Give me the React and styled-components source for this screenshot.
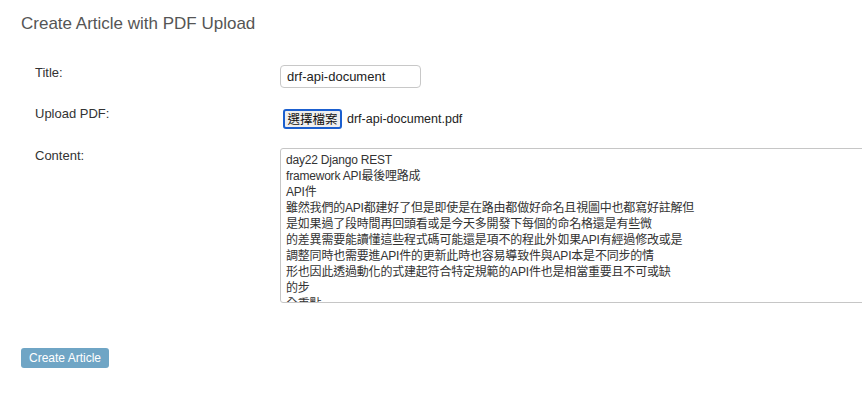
import React from 'react'
import styled, { createGlobalStyle } from 'styled-components'

const GlobalStyle = createGlobalStyle`
  html, body {
    margin: 0;
    padding: 0;
    background: #fff;
    overflow: hidden;
  }
  body {
    font-family: "Liberation Sans", Arial, "Noto Sans CJK TC", sans-serif;
    color: #333;
  }
`

const CONTENT = `day22 Django REST
framework API最後哩路成
API件
雖然我們的API都建好了但是即使是在路由都做好命名且視圖中也都寫好註解但
是如果過了段時間再回頭看或是今天多開發下每個的命名格還是有些微
的差異需要能讀懂這些程式碼可能還是項不的程此外如果API有經過修改或是
調整同時也需要進API件的更新此時也容易導致件與API本是不同步的情
形也因此透過動化的式建起符合特定規範的API件也是相當重要且不可或缺
的步
全重點`

const App = () => {
  return (
    <>
      <GlobalStyle />
      <Page>
        <Heading>Create Article with PDF Upload</Heading>
        <Form onSubmit={(e) => e.preventDefault()}>
          <Fields>
            <Label $top={0}>Title:</Label>
            <TextInput defaultValue="drf-api-document" />

            <Label $top={0}>Upload PDF:</Label>
            <FilePicker>
              <FileButton type="button">選擇檔案</FileButton>
              <FileName>drf-api-document.pdf</FileName>
            </FilePicker>

            <Label $top={0}>Content:</Label>
            <ContentArea defaultValue={CONTENT} />
          </Fields>
          <SubmitButton type="submit">Create Article</SubmitButton>
        </Form>
      </Page>
    </>
  )
}

export default App

const Page = styled.div`
  padding: 14px 0 0 21px;
`

const Heading = styled.h1`
  margin: 0;
  font-size: 17px;
  line-height: 20px;
  font-weight: 400;
  color: #555;
`

const Form = styled.form`
  margin-top: 31px;
  display: flex;
  flex-direction: column;
  align-items: flex-start;
`

const Fields = styled.div`
  display: grid;
  grid-template-columns: 245px auto;
  row-gap: 18px;
  margin-left: 14px;
  align-items: start;
`

const Label = styled.label`
  font-size: 13px;
  line-height: 16px;
  color: #333;
  margin-top: ${(p) => p.$top}px;
`

const TextInput = styled.input`
  box-sizing: border-box;
  width: 141px;
  height: 23px;
  padding: 0 6px;
  border: 1px solid #c8c8c8;
  border-radius: 4px;
  font-family: "Liberation Sans", Arial, sans-serif;
  font-size: 13px;
  color: #222;
  outline: none;
`

const FilePicker = styled.div`
  display: flex;
  align-items: center;
  gap: 5px;
  height: 24px;
  padding-top: 2px;
  box-sizing: border-box;
  padding-left: 3px;
`

const FileButton = styled.button`
  box-sizing: border-box;
  height: 20px;
  width: 59px;
  padding: 0;
  background: #efefef;
  border: 2px solid #1b5fcf;
  border-radius: 3px;
  font-family: "Noto Sans CJK TC", sans-serif;
  font-size: 12.5px;
  line-height: 16px;
  color: #111;
`

const FileName = styled.span`
  font-size: 12.5px;
  color: #222;
`

const ContentArea = styled.textarea`
  box-sizing: border-box;
  width: 620px;
  height: 155px;
  padding: 3px 5px;
  border: 1px solid #c6c6c6;
  border-radius: 3px;
  font-family: "Liberation Sans", Arial, "Noto Sans CJK TC", sans-serif;
  font-size: 12px;
  line-height: 16px;
  letter-spacing: -0.2px;
  color: #333;
  resize: none;
  outline: none;
  overflow: hidden;
`

const SubmitButton = styled.button`
  margin-top: 45px;
  height: 20px;
  padding: 0 8px;
  background: #6fa5c5;
  border: none;
  border-radius: 3px;
  font-family: "Liberation Sans", Arial, sans-serif;
  font-size: 12px;
  color: #fff;
  cursor: pointer;
`
